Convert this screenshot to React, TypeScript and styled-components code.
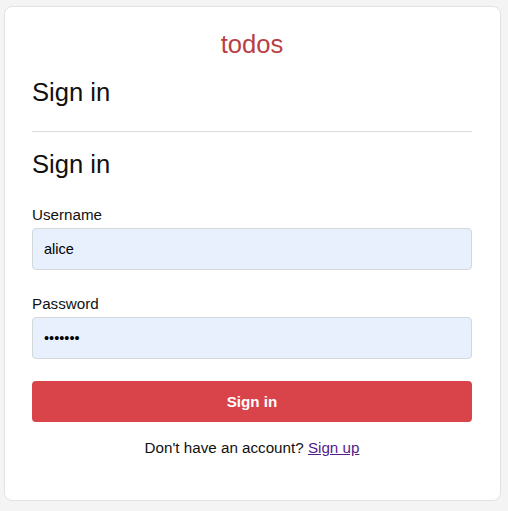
import React from "react";
import styled, { createGlobalStyle } from "styled-components";

const Global = createGlobalStyle`
  html, body {
    margin: 0;
    padding: 0;
    background: #f4f4f4;
    font-family: "Liberation Sans", Arial, sans-serif;
    color: #111;
  }
  * { box-sizing: border-box; }
`;

const Page = styled.div`
  padding: 6px 7px 10px 4px;
`;

const Card = styled.main`
  background: #fff;
  border: 1px solid #e2e2e2;
  border-radius: 8px;
  padding: 23px 28px 44px 27px;
  height: 495px;
`;

const Brand = styled.h1`
  margin: 0;
  text-align: center;
  font-size: 25.6px;
  font-weight: 400;
  line-height: 29px;
  color: #b83f45;
`;

const Heading = styled.h2<{ $top: number; $bottom: number }>`
  margin: ${(p) => p.$top}px 0 ${(p) => p.$bottom}px;
  font-size: 25.6px;
  font-weight: 400;
  line-height: 29px;
`;

const Divider = styled.hr`
  margin: 0;
  border: 0;
  border-top: 1px solid #dcdcdc;
`;

const Form = styled.form`
  display: flex;
  flex-direction: column;
  margin-top: 27px;
`;

const Field = styled.div`
  display: flex;
  flex-direction: column;
  gap: 5px;
  margin-bottom: 25px;
`;

const Label = styled.label`
  font-size: 15.2px;
  line-height: 17px;
`;

const Input = styled.input`
  height: 42px;
  width: 100%;
  border: 1px solid #d4d7dc;
  border-radius: 4px;
  background: #e8f0fe;
  padding: 0 11px;
  font-family: "Liberation Sans", Arial, sans-serif;
  font-size: 14.5px;
  color: #000;
  outline: none;
`;

const SubmitButton = styled.button`
  margin-top: -3px;
  height: 41px;
  width: 100%;
  border: 0;
  border-radius: 4px;
  background: #d9434a;
  color: #fff;
  font-family: "Liberation Sans", Arial, sans-serif;
  font-size: 15.2px;
  font-weight: 700;
  cursor: pointer;
`;

const Footer = styled.p`
  margin: 17px 0 0;
  text-align: center;
  font-size: 15.2px;
  line-height: 17px;
  color: #111;
`;

const Link = styled.a`
  color: #551a8b;
  text-decoration: underline;
`;

export default function App() {
  return (
    <>
      <Global />
      <Page>
        <Card>
          <Brand>todos</Brand>
          <Heading $top={19} $bottom={24}>Sign in</Heading>
          <Divider />
          <Heading $top={18} $bottom={0}>Sign in</Heading>
          <Form onSubmit={(e) => e.preventDefault()}>
            <Field>
              <Label htmlFor="username">Username</Label>
              <Input id="username" type="text" defaultValue="alice" />
            </Field>
            <Field>
              <Label htmlFor="password">Password</Label>
              <Input id="password" type="password" defaultValue="secret1" />
            </Field>
            <SubmitButton type="submit">Sign in</SubmitButton>
          </Form>
          <Footer>
            Don't have an account? <Link href="#">Sign up</Link>
          </Footer>
        </Card>
      </Page>
    </>
  );
}
